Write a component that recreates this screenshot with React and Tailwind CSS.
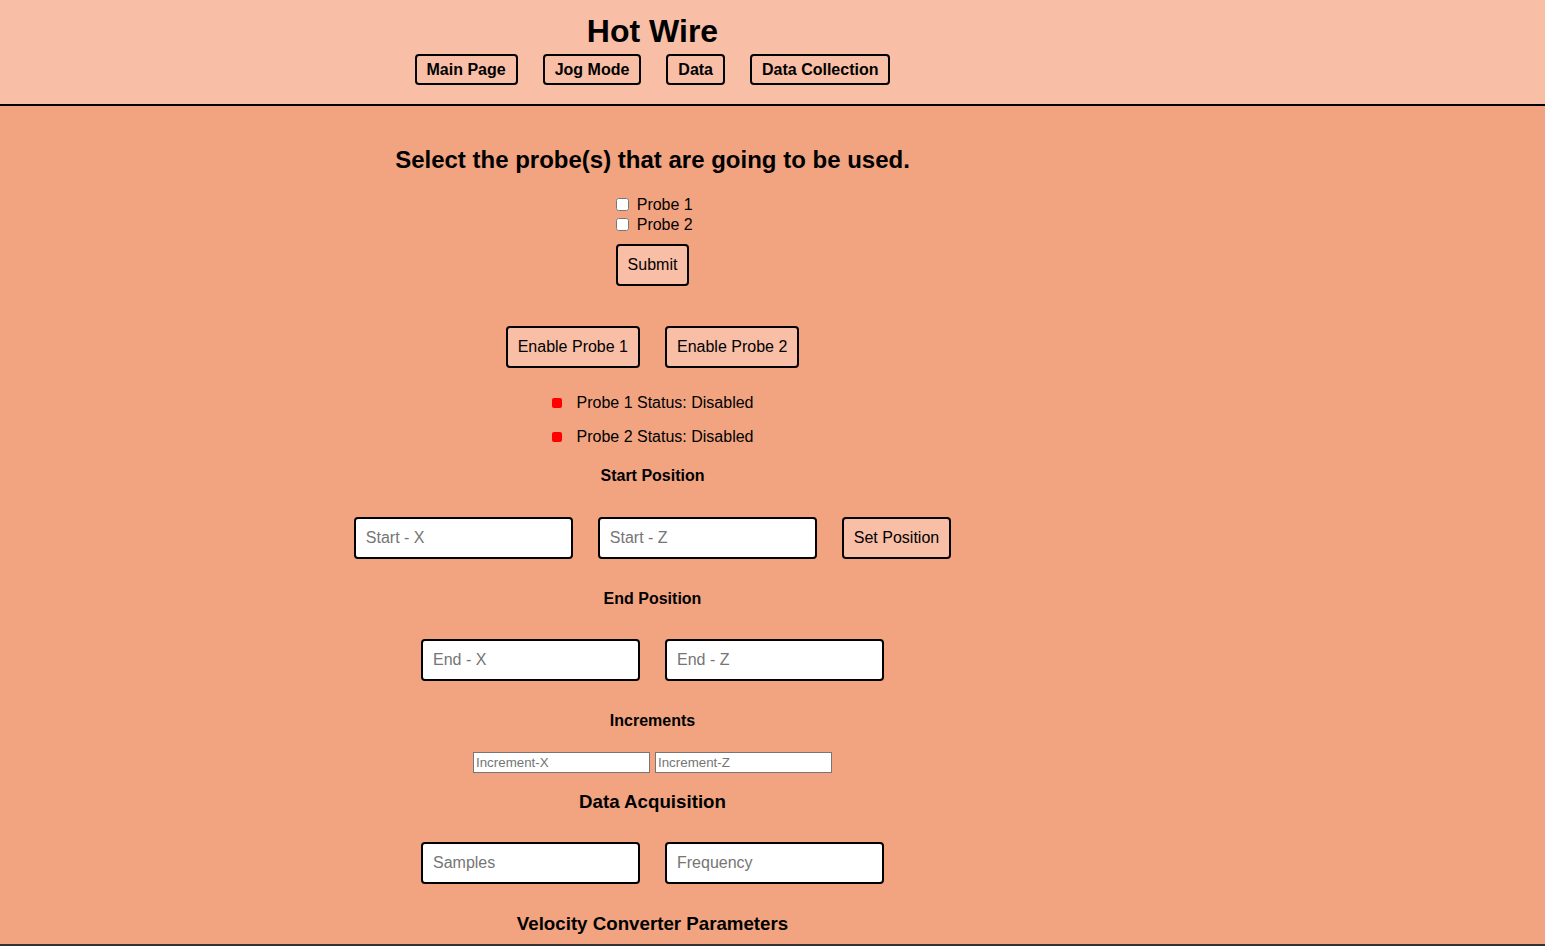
import React from "react";

const font = { fontFamily: '"Liberation Sans", Arial, sans-serif' };

function NavBtn({ children }) {
  return (
    <button className="h-[31px] px-[10px] border-2 border-black rounded-[4px] text-[16px] font-bold leading-[18px] text-black bg-transparent">
      {children}
    </button>
  );
}

function Btn({ children }) {
  return (
    <button className="h-[42px] px-[10px] border-2 border-black rounded-[4px] text-[16px] leading-[18px] text-black bg-[#F9BEA6]">
      {children}
    </button>
  );
}

function Field({ placeholder }) {
  return (
    <input
      type="text"
      placeholder={placeholder}
      className="w-[219px] h-[42px] px-[10px] border-2 border-black rounded-[4px] bg-white text-[16px] text-black placeholder:text-[#757575] outline-none"
    />
  );
}

function SmallField({ placeholder }) {
  return (
    <input
      type="text"
      placeholder={placeholder}
      className="w-[177px] h-[21px] px-[2px] border border-[#767676] bg-white text-[13.33px] text-black placeholder:text-[#757575] outline-none"
    />
  );
}

function Status({ label }) {
  return (
    <div className="flex items-center justify-center h-[20px] gap-[15px] text-[16px] leading-[20px]">
      <span className="w-[10px] h-[10px] rounded-[2px] bg-[#FF0000]" />
      <span>{label}</span>
    </div>
  );
}

export default function App() {
  return (
    <div style={font} className="h-screen overflow-hidden flex flex-col text-black">
      <header className="h-[106px] shrink-0 bg-[#F9BEA6] border-b-2 border-black">
        <div className="w-[1305px] flex flex-col items-center pt-[13px]">
          <h1 className="text-[32px] font-bold leading-[37px]">Hot Wire</h1>
          <nav className="flex gap-[25px] mt-[4px]">
            <NavBtn>Main Page</NavBtn>
            <NavBtn>Jog Mode</NavBtn>
            <NavBtn>Data</NavBtn>
            <NavBtn>Data Collection</NavBtn>
          </nav>
        </div>
      </header>
      <main className="flex-1 bg-[#F2A481] border-b-2 border-[#333333]">
        <div className="w-[1305px] flex flex-col items-center">
          <h2 className="mt-[40px] text-[24px] font-bold leading-[28px]">
            Select the probe(s) that are going to be used.
          </h2>
          <div className="mt-[21px] text-center text-[16px] leading-[20px]">
            <div className="h-[20px]">
              <input type="checkbox" className="m-[3px_3px_3px_4px] w-[13px] h-[13px] align-[-1px]" />{" "}
              <label>Probe 1</label>
            </div>
            <div className="h-[20px]">
              <input type="checkbox" className="m-[3px_3px_3px_4px] w-[13px] h-[13px] align-[-1px]" />{" "}
              <label>Probe 2</label>
            </div>
          </div>
          <div className="mt-[9px]">
            <Btn>Submit</Btn>
          </div>
          <div className="mt-[40px] flex gap-[25px]">
            <Btn>Enable Probe 1</Btn>
            <Btn>Enable Probe 2</Btn>
          </div>
          <div className="mt-[25px] flex flex-col gap-[14px]">
            <Status label="Probe 1 Status: Disabled" />
            <Status label="Probe 2 Status: Disabled" />
          </div>
          <h3 className="mt-[19px] text-[16px] font-bold leading-[20px]">Start Position</h3>
          <div className="mt-[31px] flex gap-[25px]">
            <Field placeholder="Start - X" />
            <Field placeholder="Start - Z" />
            <Btn>Set Position</Btn>
          </div>
          <h3 className="mt-[30px] text-[16px] font-bold leading-[20px]">End Position</h3>
          <div className="mt-[30px] flex gap-[25px]">
            <Field placeholder="End - X" />
            <Field placeholder="End - Z" />
          </div>
          <h3 className="mt-[30px] text-[16px] font-bold leading-[20px]">Increments</h3>
          <div className="mt-[21px] flex gap-[5px]">
            <SmallField placeholder="Increment-X" />
            <SmallField placeholder="Increment-Z" />
          </div>
          <h3 className="mt-[18px] text-[18.72px] font-bold leading-[22px]">Data Acquisition</h3>
          <div className="mt-[29px] flex gap-[25px]">
            <Field placeholder="Samples" />
            <Field placeholder="Frequency" />
          </div>
          <h3 className="mt-[29px] text-[18.72px] font-bold leading-[22px]">
            Velocity Converter Parameters
          </h3>
        </div>
      </main>
    </div>
  );
}
